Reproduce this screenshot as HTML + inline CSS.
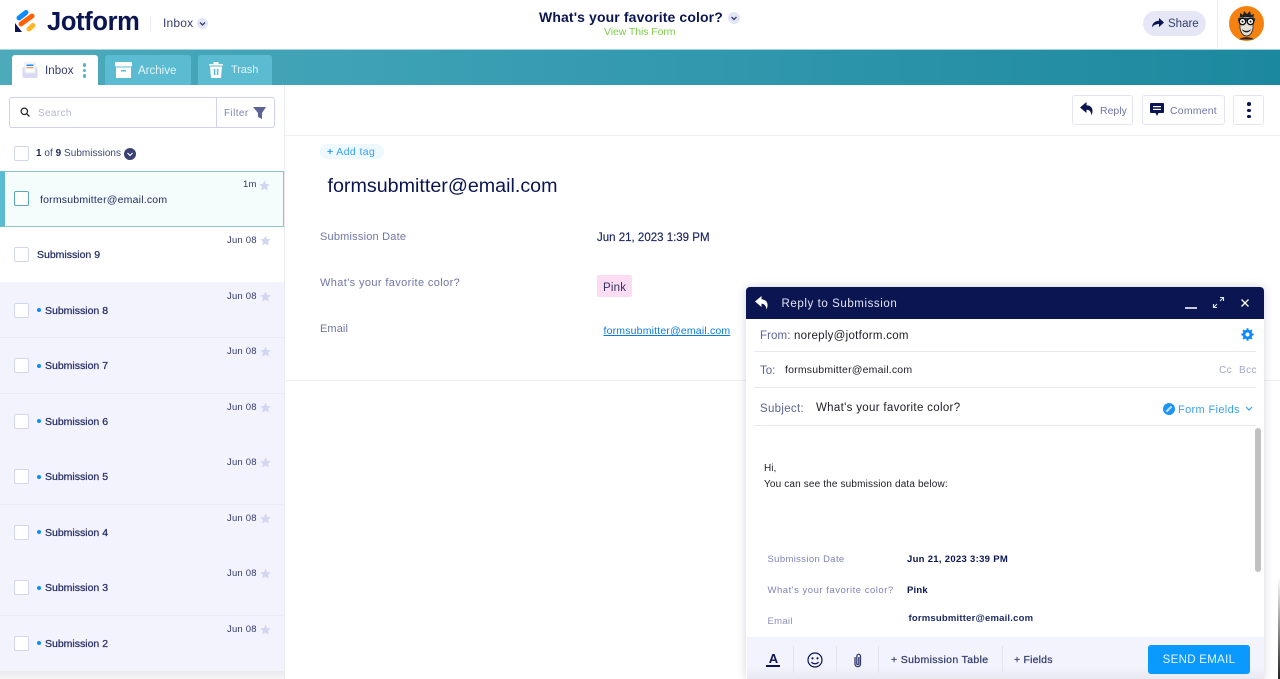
<!DOCTYPE html>
<html><head><meta charset="utf-8"><title>Jotform Inbox</title>
<style>
*{box-sizing:border-box}
html,body{margin:0;padding:0}
body{width:1280px;height:679px;overflow:hidden;background:#fff;position:relative;font-family:"Liberation Sans",sans-serif;color:#0a1551}
.t{position:absolute;white-space:nowrap;line-height:16px}
.b{position:absolute}
svg{position:absolute;overflow:visible}
.row{position:absolute;left:0;width:284px;height:56px;border-bottom:1px solid #eaebf7;background:#f3f3fe}
.cb{position:absolute;left:14px;width:15px;height:15px;border:1.5px solid #d3d6ef;border-radius:2px;background:#fff}
.dt{position:absolute;white-space:nowrap;font-size:9.5px;line-height:12px;color:#343c6a;left:227px;letter-spacing:.2px}
.nm{position:absolute;white-space:nowrap;font-size:10.5px;line-height:14px;color:#2b3266;-webkit-text-stroke:.3px #2b3266}
.dot{position:absolute;left:37px;width:4px;height:4px;border-radius:50%;background:#0a8cff}
.btn{position:absolute;top:95px;height:30px;border:1.5px solid #e3e5f5;border-radius:3px;background:#fff}
.lab{color:#6f76a7;font-size:11px;letter-spacing:.3px}
.sep{position:absolute;height:1px;background:#e8e9ee}
</style></head>
<body>
<!-- top bar -->
<svg style="left:14px;top:9px" width="24" height="25" viewBox="0 0 24 25">
<path d="M5 9 L12 3.500" stroke="#0a8cff" stroke-width="5" stroke-linecap="round"/>
<path d="M7 15 L18 7" stroke="#ff6100" stroke-width="5" stroke-linecap="round"/>
<path d="M15 20 L19 16.500" stroke="#ffb629" stroke-width="5" stroke-linecap="round"/>
<path d="M1 14 V23 H8 Z" fill="#0a1551"/>
</svg>
<div class="t" style="left:47px;top:6px;font-size:25.500px;line-height:32px;font-weight:bold;letter-spacing:-.35px;color:#0a1551">Jotform</div>
<div class="b" style="left:150px;top:16px;width:1px;height:15px;background:#e9eaf3"></div>
<div class="t" style="left:163px;top:15px;font-size:12px;color:#343c6a;letter-spacing:.2px">Inbox</div>
<div class="b" style="left:197px;top:18px;width:11px;height:11px;border-radius:50%;background:#e3e5f5"></div>
<svg style="left:197px;top:18px" width="11" height="11"><path d="M3 4.500 L5.500 7 L8 4.500" fill="none" stroke="#343c6a" stroke-width="1.300"/></svg>
<div class="t" style="left:539px;top:9px;font-size:14px;font-weight:bold;letter-spacing:.12px;color:#0a1551">What's your favorite color?</div>
<div class="b" style="left:728px;top:12px;width:12px;height:12px;border-radius:50%;background:#e3e5f5"></div>
<svg style="left:728px;top:12px" width="12" height="12"><path d="M3.500 5 L6 7.500 L8.500 5" fill="none" stroke="#343c6a" stroke-width="1.300"/></svg>
<div class="t" style="left:604px;top:24px;font-size:10.500px;color:#7fca4d;letter-spacing:-.08px">View This Form</div>
<div class="b" style="left:1143px;top:11px;width:63px;height:25px;border-radius:13px;background:#e5e7f7"></div>
<svg style="left:1151px;top:17px" width="13" height="12" viewBox="0 0 13 12"><path d="M8 1 L13 5.500 L8 10 V7 C5 7 2.500 8 1 10.500 C1 6.500 4 3.800 8 3.800 Z" fill="#0a1551"/></svg>
<div class="t" style="left:1168px;top:16px;font-size:11.500px;color:#343c6a">Share</div>
<div class="b" style="left:1217px;top:0;width:1px;height:48px;background:#eceef6"></div>
<div class="b" style="left:1229px;top:6px;width:35px;height:35px;border-radius:50%;background:#f58210"></div>
<svg style="left:1229px;top:6px" width="35" height="35" viewBox="0 0 35 35">
<path d="M11 12 L11 7 L14 9 L15 5 L18 8 L21 5 L22 9 L25 8 L24 13 Z" fill="#222"/>
<path d="M11 11 H24 V22 C23 28 20 30 17.500 30 C15 30 12 28 11 22 Z" fill="#e6e2da" stroke="#222" stroke-width=".8"/>
<path d="M9 12 H26 V15 H9 Z" fill="#333"/>
<circle cx="13.500" cy="15.500" r="3.200" fill="#fff" stroke="#111" stroke-width="1.400"/><circle cx="21.500" cy="15.500" r="3.200" fill="#fff" stroke="#111" stroke-width="1.400"/>
<circle cx="13.500" cy="15.500" r="1" fill="#111"/><circle cx="21.500" cy="15.500" r="1" fill="#111"/>
<path d="M13 23 C15 25.500 20 25.500 22 23 C21.500 27.500 13.500 27.500 13 23 Z" fill="#222"/>
<path d="M10 33.500 C13 30.500 22 30.500 25 33.500 Z" fill="#222"/>
</svg>
<div class="b" style="left:1278px;top:0;width:2px;height:679px;background:linear-gradient(#fff 0%,#fff 85%,#222 100%)"></div>

<!-- tab bar -->
<div class="b" style="left:0;top:49px;width:1280px;height:36px;background:linear-gradient(90deg,#4daabb 0%,#3b9fb4 35%,#1c889f 100%);border-top:1px solid #a8d3da"></div>
<div class="b" style="left:12px;top:55px;width:86px;height:30px;background:#fff;border-radius:3px 3px 0 0"></div>
<svg style="left:22px;top:62px" width="16" height="16" viewBox="0 0 16 16"><rect x=".5" y="5" width="15" height="11" rx="2" fill="#d8daf2"/><rect x="3" y="1" width="10" height="10" fill="#fff" stroke="#e4e6f5"/><rect x="4.500" y="2.500" width="7" height="1.600" fill="#0a8cff"/><rect x="4.500" y="5" width="7" height="1.300" fill="#ff9a4d"/></svg>
<div class="t" style="left:45px;top:63px;font-size:11.500px;color:#343c6a;letter-spacing:.1px">Inbox</div>
<div class="b" style="left:82.500px;top:63px;width:3.500px;height:3.500px;border-radius:50%;background:#55b4c5"></div>
<div class="b" style="left:82.500px;top:68.500px;width:3.500px;height:3.500px;border-radius:50%;background:#55b4c5"></div>
<div class="b" style="left:82.500px;top:74px;width:3.500px;height:3.500px;border-radius:50%;background:#55b4c5"></div>
<div class="b" style="left:105px;top:55px;width:86px;height:30px;background:#5bbcd1;border-radius:3px 3px 0 0"></div>
<svg style="left:115px;top:62px" width="17" height="16" viewBox="0 0 17 16"><rect width="17" height="4.500" rx="1" fill="#fff"/><path d="M1 5.500 H16 V16 H1 Z" fill="#fff"/><rect x="6" y="8" width="5" height="1.500" fill="#5bbcd1"/></svg>
<div class="t" style="left:138px;top:63px;font-size:11.500px;color:#e2f4f7">Archive</div>
<div class="b" style="left:198px;top:55px;width:74px;height:30px;background:#5bbcd1;border-radius:3px 3px 0 0"></div>
<svg style="left:209px;top:61px" width="14" height="17" viewBox="0 0 14 17"><path d="M0 3 H14 V4.500 H0 Z M4.500 3 V1 H9.500 V3" fill="#fff"/><path d="M1 5.500 H13 L12 17 H2 Z" fill="#fff"/><rect x="4.800" y="8" width="1.600" height="6" fill="#5bbcd1"/><rect x="7.800" y="8" width="1.600" height="6" fill="#5bbcd1"/></svg>
<div class="t" style="left:231px;top:62px;font-size:11px;color:#e2f4f7;letter-spacing:-.1px">Trash</div>

<!-- sidebar -->
<div class="b" style="left:284px;top:85px;width:1px;height:594px;background:#e9eaf3"></div>
<div class="b" style="left:9px;top:97px;width:266px;height:31px;border:1.500px solid #cfd2ea;border-radius:3px;background:#fff"></div>
<div class="b" style="left:216px;top:97px;width:1px;height:31px;background:#cfd2ea"></div>
<svg style="left:20px;top:107px" width="10" height="10" viewBox="0 0 10 10"><circle cx="4.300" cy="4.300" r="3.200" fill="none" stroke="#222" stroke-width="1.200"/><path d="M6.800 6.800 L9.500 9.500" stroke="#222" stroke-width="1.300"/></svg>
<div class="t" style="left:38px;top:106px;font-size:10px;color:#b4b7d2;letter-spacing:.35px">Search</div>
<div class="t" style="left:224px;top:106px;font-size:10px;color:#8186ad;letter-spacing:.4px">Filter</div>
<svg style="left:253px;top:107px" width="13" height="12" viewBox="0 0 13 12"><path d="M0 0 H13 L9 6 V12 L5 10 V6 Z" fill="#5d6493"/></svg>
<div class="cb" style="top:146px"></div>
<div class="t" style="left:36px;top:146px;font-size:10px;color:#40466f;letter-spacing:.03px"><b style="color:#222a55">1</b> of <b style="color:#222a55">9</b> Submissions</div>
<div class="b" style="left:124px;top:148px;width:12px;height:12px;border-radius:50%;background:#3b4272"></div>
<svg style="left:124px;top:148px" width="12" height="12"><path d="M3.500 5 L6 7.500 L8.500 5" fill="none" stroke="#fff" stroke-width="1.200"/></svg>

<div class="b" style="left:0;top:171px;width:284px;height:56px;background:#f5fcfc;border:1px solid #8cc3cf;border-left:5px solid #5bbcd1"></div>
<div class="cb" style="top:191px;border-color:#5ba7b8;background:#fff"></div>
<div class="t" style="left:40px;top:192px;font-size:10.500px;color:#22295f;letter-spacing:.2px">formsubmitter@email.com</div>
<div class="dt" style="top:179px;left:243px">1m</div>
<svg style="left:259px;top:180px" width="11" height="11" viewBox="0 0 12 12"><path d="M6 .5 L7.700 4.300 L11.800 4.700 L8.700 7.400 L9.600 11.500 L6 9.400 L2.400 11.500 L3.300 7.400 L.2 4.700 L4.300 4.300 Z" fill="#d3d6ef"/></svg>

<div class="cb" style="top:247px"></div>
<div class="nm" style="left:37px;top:248px">Submission 9</div>
<div class="dt" style="top:235px">Jun 08</div>
<svg style="left:260px;top:235px" width="11" height="11" viewBox="0 0 12 12"><path d="M6 .5 L7.700 4.300 L11.800 4.700 L8.700 7.400 L9.600 11.500 L6 9.400 L2.400 11.500 L3.300 7.400 L.2 4.700 L4.300 4.300 Z" fill="#d3d6ef"/></svg>

<div class="row" style="top:282px"></div>
<div class="cb" style="top:303px"></div><div class="dot" style="top:308px"></div>
<div class="nm" style="left:45px;top:303.500px">Submission 8</div><div class="dt" style="top:290.500px">Jun 08</div>
<svg style="left:260px;top:291px" width="11" height="11" viewBox="0 0 12 12"><path d="M6 .5 L7.700 4.300 L11.800 4.700 L8.700 7.400 L9.600 11.500 L6 9.400 L2.400 11.500 L3.300 7.400 L.2 4.700 L4.300 4.300 Z" fill="#d3d6ef"/></svg>

<div class="row" style="top:338px"></div>
<div class="cb" style="top:358px"></div><div class="dot" style="top:363.500px"></div>
<div class="nm" style="left:45px;top:359px">Submission 7</div><div class="dt" style="top:346px">Jun 08</div>
<svg style="left:260px;top:346px" width="11" height="11" viewBox="0 0 12 12"><path d="M6 .5 L7.700 4.300 L11.800 4.700 L8.700 7.400 L9.600 11.500 L6 9.400 L2.400 11.500 L3.300 7.400 L.2 4.700 L4.300 4.300 Z" fill="#d3d6ef"/></svg>

<div class="row" style="top:393.500px"></div>
<div class="cb" style="top:414px"></div><div class="dot" style="top:419px"></div>
<div class="nm" style="left:45px;top:414.500px">Submission 6</div><div class="dt" style="top:401.500px">Jun 08</div>
<svg style="left:260px;top:402px" width="11" height="11" viewBox="0 0 12 12"><path d="M6 .5 L7.700 4.300 L11.800 4.700 L8.700 7.400 L9.600 11.500 L6 9.400 L2.400 11.500 L3.300 7.400 L.2 4.700 L4.300 4.300 Z" fill="#d3d6ef"/></svg>

<div class="row" style="top:449px"></div>
<div class="cb" style="top:469px"></div><div class="dot" style="top:474.500px"></div>
<div class="nm" style="left:45px;top:470px">Submission 5</div><div class="dt" style="top:457px">Jun 08</div>
<svg style="left:260px;top:457px" width="11" height="11" viewBox="0 0 12 12"><path d="M6 .5 L7.700 4.300 L11.800 4.700 L8.700 7.400 L9.600 11.500 L6 9.400 L2.400 11.500 L3.300 7.400 L.2 4.700 L4.300 4.300 Z" fill="#d3d6ef"/></svg>

<div class="row" style="top:504.500px"></div>
<div class="cb" style="top:525px"></div><div class="dot" style="top:530px"></div>
<div class="nm" style="left:45px;top:525.500px">Submission 4</div><div class="dt" style="top:512.500px">Jun 08</div>
<svg style="left:260px;top:513px" width="11" height="11" viewBox="0 0 12 12"><path d="M6 .5 L7.700 4.300 L11.800 4.700 L8.700 7.400 L9.600 11.500 L6 9.400 L2.400 11.500 L3.300 7.400 L.2 4.700 L4.300 4.300 Z" fill="#d3d6ef"/></svg>

<div class="row" style="top:560px"></div>
<div class="cb" style="top:580px"></div><div class="dot" style="top:585.500px"></div>
<div class="nm" style="left:45px;top:581px">Submission 3</div><div class="dt" style="top:568px">Jun 08</div>
<svg style="left:260px;top:568px" width="11" height="11" viewBox="0 0 12 12"><path d="M6 .5 L7.700 4.300 L11.800 4.700 L8.700 7.400 L9.600 11.500 L6 9.400 L2.400 11.500 L3.300 7.400 L.2 4.700 L4.300 4.300 Z" fill="#d3d6ef"/></svg>

<div class="row" style="top:615.500px;height:56px;border-bottom:0"></div>
<div class="cb" style="top:636px"></div><div class="dot" style="top:641px"></div>
<div class="nm" style="left:45px;top:636.500px">Submission 2</div><div class="dt" style="top:623.500px">Jun 08</div>
<svg style="left:260px;top:624px" width="11" height="11" viewBox="0 0 12 12"><path d="M6 .5 L7.700 4.300 L11.800 4.700 L8.700 7.400 L9.600 11.500 L6 9.400 L2.400 11.500 L3.300 7.400 L.2 4.700 L4.300 4.300 Z" fill="#d3d6ef"/></svg>
<div class="b" style="left:0;top:671px;width:284px;height:8px;background:linear-gradient(#e9e9ee,#f6f6f6)"></div>

<!-- toolbar -->
<div class="btn" style="left:1072px;width:61px"></div>
<svg style="left:1080px;top:102px" width="14" height="14" viewBox="0 0 14 14"><path d="M6.500 0 L0 5.500 L6.500 11 V7.800 C9.500 7.800 11 9.500 11.500 13.500 C14 8 12 3.500 6.500 3.300 Z" fill="#0a1551"/></svg>
<div class="t" style="left:1100px;top:103px;font-size:10.500px;color:#6f76a7">Reply</div>
<div class="btn" style="left:1142px;width:83px"></div>
<svg style="left:1150px;top:103px" width="14" height="13" viewBox="0 0 14 13"><path d="M1 0 H13 A1 1 0 0 1 14 1 V9 A1 1 0 0 1 13 10 H8.500 L7 13 L5.500 10 H1 A1 1 0 0 1 0 9 V1 A1 1 0 0 1 1 0 Z" fill="#0a1551"/><rect x="3" y="3" width="8" height="1.200" fill="#fff"/><rect x="3" y="5.800" width="8" height="1.200" fill="#fff"/></svg>
<div class="t" style="left:1170px;top:103px;font-size:10.500px;color:#6f76a7;letter-spacing:.2px">Comment</div>
<div class="btn" style="left:1233px;width:31px"></div>
<div class="b" style="left:1247px;top:102px;width:3.500px;height:3.500px;border-radius:50%;background:#0a1551"></div>
<div class="b" style="left:1247px;top:108.500px;width:3.500px;height:3.500px;border-radius:50%;background:#0a1551"></div>
<div class="b" style="left:1247px;top:114.500px;width:3.500px;height:3.500px;border-radius:50%;background:#0a1551"></div>
<div class="sep" style="left:285px;top:135px;width:995px;background:#eeeff3"></div>

<!-- content -->
<div class="b" style="left:320px;top:144px;width:64px;height:15px;border-radius:8px;background:#edf8ff"></div>
<div class="t" style="left:327px;top:144px;font-size:10.500px;color:#3aa0f0;letter-spacing:.4px"><b>+</b> Add tag</div>
<div class="t" style="left:327.500px;top:174px;font-size:19.700px;line-height:24px;color:#0a1551">formsubmitter@email.com</div>
<div class="t lab" style="left:320px;top:229px;letter-spacing:.2px">Submission Date</div>
<div class="t" style="left:597px;top:230px;font-size:11.500px;color:#1a2460;-webkit-text-stroke:.15px #1a2460">Jun 21, 2023 1:39 PM</div>
<div class="t lab" style="left:320px;top:275px;letter-spacing:.38px">What's your favorite color?</div>
<div class="b" style="left:597px;top:275px;width:35px;height:22px;border-radius:2px;background:#fcdcf3"></div>
<div class="t" style="left:603px;top:280px;font-size:11.500px;color:#2b3266;letter-spacing:.2px">Pink</div>
<div class="t lab" style="left:320px;top:321px;letter-spacing:.1px">Email</div>
<div class="t" style="left:603.500px;top:323px;font-size:10.500px;color:#0a7be0;text-decoration:underline;letter-spacing:.18px">formsubmitter@email.com</div>
<div class="sep" style="left:285px;top:380px;width:461px;background:#eeeff3"></div>
<div class="sep" style="left:1264px;top:380px;width:16px;background:#eeeff3"></div>

<!-- modal -->
<div class="b" style="left:746px;top:287px;width:518px;height:392px;background:#fff;box-shadow:0 0 9px rgba(60,65,110,.22);border-radius:4px 4px 0 0"></div>
<div class="b" style="left:746px;top:287px;width:518px;height:32px;background:#0a1551;border-radius:4px 4px 0 0"></div>
<svg style="left:755px;top:296px" width="14" height="14" viewBox="0 0 14 14"><path d="M6.500 0 L0 5.500 L6.500 11 V7.800 C9.500 7.800 11 9.500 11.500 13.500 C14 8 12 3.500 6.500 3.300 Z" fill="#fff"/></svg>
<div class="t" style="left:781.500px;top:295.500px;font-size:11.500px;color:#e4e6f5;letter-spacing:.58px">Reply to Submission</div>
<div class="b" style="left:1185px;top:307px;width:12px;height:1.500px;background:#c7cadf"></div>
<svg style="left:1213px;top:297px" width="11" height="11" viewBox="0 0 11 11"><path d="M7 0.500 H10.500 V4 M10.500 .5 L7 4 M4 10.500 H.5 V7 M.5 10.500 L4 7" fill="none" stroke="#e4e6f5" stroke-width="1.100"/></svg>
<svg style="left:1241px;top:299px" width="8" height="8" viewBox="0 0 8 8"><path d="M.5 .5 L7.500 7.500 M7.500 .5 L.5 7.500" stroke="#fff" stroke-width="1.300"/></svg>

<div class="t" style="left:760px;top:328px;font-size:11.500px;color:#5d6493;letter-spacing:.1px">From:</div>
<div class="t" style="left:794px;top:328px;font-size:11.500px;color:#1c1c24;letter-spacing:.28px">noreply@jotform.com</div>
<svg style="left:1241px;top:328px" width="13" height="13" viewBox="0 0 13 13"><circle cx="6.500" cy="6.500" r="3.600" fill="none" stroke="#0a8cff" stroke-width="2.600"/><path d="M6.500 .3 V12.700 M.3 6.500 H12.700 M2.100 2.100 L10.900 10.900 M10.900 2.100 L2.100 10.900" stroke="#0a8cff" stroke-width="1.900"/><circle cx="6.500" cy="6.500" r="2" fill="#fff"/></svg>
<div class="sep" style="left:754px;top:351px;width:502px"></div>
<div class="t" style="left:760px;top:363px;font-size:11.500px;color:#5d6493">To:</div>
<div class="t" style="left:785px;top:362px;font-size:10.500px;color:#1c1c24;letter-spacing:.2px">formsubmitter@email.com</div>
<div class="t" style="left:1219px;top:363px;font-size:10px;color:#a3a7c9;letter-spacing:.4px">Cc</div>
<div class="t" style="left:1239px;top:363px;font-size:10px;color:#a3a7c9;letter-spacing:.4px">Bcc</div>
<div class="sep" style="left:754px;top:387px;width:502px"></div>
<div class="t" style="left:760px;top:400.500px;font-size:11.500px;color:#5d6493;letter-spacing:.3px">Subject:</div>
<div class="t" style="left:816px;top:400px;font-size:11.500px;color:#1c1c24;letter-spacing:.32px">What's your favorite color?</div>
<div class="b" style="left:1163px;top:403px;width:12px;height:12px;border-radius:50%;background:#1c96f2"></div>
<svg style="left:1163px;top:403px" width="12" height="12"><path d="M4 8 L8 4" stroke="#bfe2fb" stroke-width="2" stroke-linecap="round"/></svg>
<div class="t" style="left:1178px;top:402px;font-size:11px;color:#3aa0f0;letter-spacing:.35px">Form Fields</div>
<svg style="left:1245px;top:406px" width="8" height="6"><path d="M1 1 L4 4 L7 1" fill="none" stroke="#3aa0f0" stroke-width="1.200"/></svg>
<div class="sep" style="left:754px;top:425px;width:502px"></div>
<div class="b" style="left:1255px;top:428px;width:6px;height:144px;border-radius:3px;background:#c1c1c1"></div>

<div class="t" style="left:764px;top:461px;font-size:10px;color:#1c1c24">Hi,</div>
<div class="t" style="left:764px;top:477px;font-size:10px;color:#1c1c24;letter-spacing:.15px">You can see the submission data below:</div>
<div class="t" style="left:767.500px;top:552px;font-size:9.500px;color:#7d83b8;letter-spacing:.35px">Submission Date</div>
<div class="t" style="left:907px;top:552px;font-size:9.500px;font-weight:bold;color:#0a1551;letter-spacing:.3px">Jun 21, 2023 3:39 PM</div>
<div class="t" style="left:767.500px;top:583px;font-size:9.500px;color:#7d83b8;letter-spacing:.52px">What's your favorite color?</div>
<div class="t" style="left:907px;top:583px;font-size:9.500px;font-weight:bold;color:#0a1551;letter-spacing:.2px">Pink</div>
<div class="t" style="left:767.500px;top:614px;font-size:9.500px;color:#8a8fb5;letter-spacing:.3px">Email</div>
<div class="t" style="left:908.500px;top:610.500px;font-size:9.500px;font-weight:bold;color:#1e2a63;letter-spacing:.2px">formsubmitter@email.com</div>

<!-- modal footer -->
<div class="b" style="left:747px;top:637px;width:517px;height:42px;background:linear-gradient(#f3f3fe 70%,#e9e9f1)"></div>
<div class="b" style="left:793px;top:646px;width:1px;height:27px;background:#e3e4ee"></div>
<div class="b" style="left:836px;top:646px;width:1px;height:27px;background:#e3e4ee"></div>
<div class="b" style="left:878px;top:646px;width:1px;height:27px;background:#e3e4ee"></div>
<div class="b" style="left:1002px;top:646px;width:1px;height:27px;background:#e3e4ee"></div>
<div class="t" style="left:767.500px;top:651px;width:12px;text-align:center;font-size:13px;font-weight:bold;color:#0a1551">A</div>
<div class="b" style="left:766px;top:665px;width:14px;height:1.500px;background:#0a1551"></div>
<svg style="left:807px;top:652px" width="16" height="16" viewBox="0 0 16 16"><circle cx="8" cy="8" r="7" fill="none" stroke="#0a1551" stroke-width="1.200"/><circle cx="5.500" cy="6.300" r="1.100" fill="#0a1551"/><circle cx="10.500" cy="6.300" r="1.100" fill="#0a1551"/><path d="M4.500 10 C6 12.300 10 12.300 11.500 10" fill="none" stroke="#0a1551" stroke-width="1.200"/></svg>
<svg style="left:852px;top:653px" width="11" height="15" viewBox="0 0 11 15"><path d="M3 4 V11 C3 14.500 8.500 14.500 8.500 11 V3.500 C8.500 .5 4.800 .5 4.800 3.500 V10.500 C4.800 12 6.800 12 6.800 10.500 V4" fill="none" stroke="#343c6a" stroke-width="1.300"/></svg>
<div class="t" style="left:891px;top:652px;font-size:10.500px;color:#343c6a;letter-spacing:.35px;-webkit-text-stroke:.25px #343c6a">+ Submission Table</div>
<div class="t" style="left:1014px;top:652px;font-size:10.500px;color:#343c6a;letter-spacing:.2px;-webkit-text-stroke:.25px #343c6a">+ Fields</div>
<div class="b" style="left:1148px;top:645px;width:102px;height:29px;border-radius:3px;background:#0a99ff"></div>
<div class="t" style="left:1148px;top:652px;width:102px;text-align:center;font-size:11.500px;color:#e8f5ff;letter-spacing:.3px">SEND EMAIL</div>
</body></html>
